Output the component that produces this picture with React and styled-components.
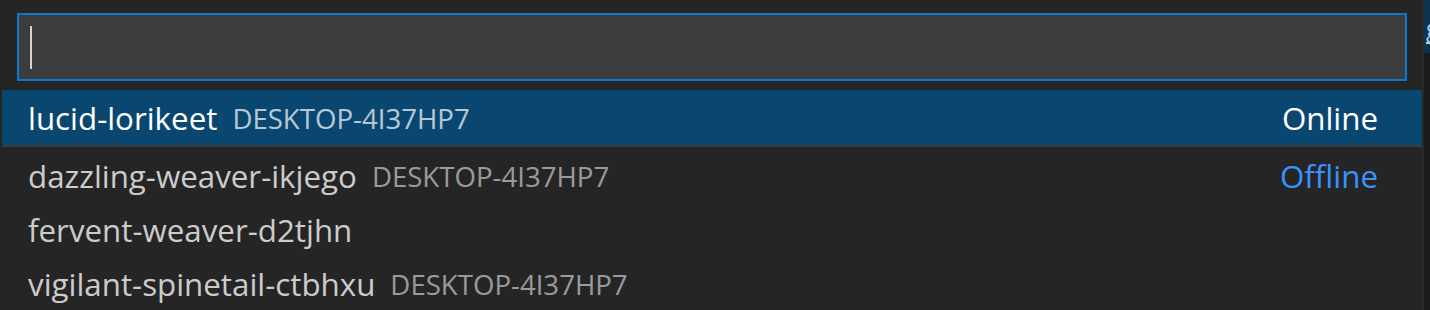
import styled, { createGlobalStyle } from "styled-components";

const GlobalStyle = createGlobalStyle`
  html, body {
    margin: 0;
    padding: 0;
    background: #1b1b1b;
  }
  body {
    font-family: "Open Sans", "Noto Sans", sans-serif;
  }
`;

const Screen = styled.div`
  display: flex;
  width: 1430px;
  height: 310px;
  overflow: hidden;
`;

const Panel = styled.div`
  width: 1423px;
  flex: none;
  background: #252526;
  padding-top: 13px;
  box-sizing: border-box;
`;

const InputBox = styled.div`
  margin: 0 16px 9px 17px;
  height: 68px;
  box-sizing: border-box;
  border: 2px solid #0a7ad1;
  background: #3c3c3c;
  display: flex;
  align-items: center;
  padding-left: 11px;
`;

const Caret = styled.span`
  width: 2px;
  height: 43px;
  background: #d4d4d4;
`;

const List = styled.div`
  padding: 0 1px 0 2px;
`;

const Row = styled.div`
  display: flex;
  align-items: center;
  height: ${(p) => (p.$selected ? "55px" : "54px")};
  border-bottom: ${(p) => (p.$selected ? "2px solid #3a3d41" : "none")};
  margin-bottom: ${(p) => (p.$selected ? "2px" : "0")};
  background: ${(p) => (p.$selected ? "#094771" : "transparent")};
  color: ${(p) => (p.$selected ? "#ffffff" : "#cccccc")};
  padding: 0 44px 0 26px;
  font-size: 31.3px;
  white-space: nowrap;
`;

const Label = styled.span`
  flex: none;
`;

const Description = styled.span`
  margin-left: 15px;
  font-size: 27.6px;
  opacity: 0.7;
`;

const Status = styled.span`
  margin-left: auto;
  color: ${(p) => (p.$offline ? "#3794ff" : "inherit")};
`;

const Side = styled.div`
  flex: 1;
  display: flex;
  flex-direction: column;
  border-left: 1px solid #2b2b2b;
`;

const SideTop = styled.div`
  height: 53px;
  background: #0e3350;
  overflow: hidden;
  padding-top: 14px;
  box-sizing: border-box;
`;

const SideLink = styled.span`
  display: block;
  margin-left: 2px;
  color: #9ccff5;
  font-size: 24px;
  line-height: 28px;
  border-bottom: 2px solid #c8c8c8;
  width: 20px;
`;

const items = [
  { name: "lucid-lorikeet", host: "DESKTOP-4I37HP7", status: "Online", selected: true },
  { name: "dazzling-weaver-ikjego", host: "DESKTOP-4I37HP7", status: "Offline" },
  { name: "fervent-weaver-d2tjhn" },
  { name: "vigilant-spinetail-ctbhxu", host: "DESKTOP-4I37HP7" },
];

export default function App() {
  return (
    <>
      <GlobalStyle />
      <Screen>
        <Panel>
          <InputBox>
            <Caret />
          </InputBox>
          <List>
            {items.map((it) => (
              <Row key={it.name} $selected={it.selected}>
                <Label>{it.name}</Label>
                {it.host && <Description>{it.host}</Description>}
                {it.status && (
                  <Status $offline={it.status === "Offline"}>{it.status}</Status>
                )}
              </Row>
            ))}
          </List>
        </Panel>
        <Side>
          <SideTop>
            <SideLink>g</SideLink>
          </SideTop>
        </Side>
      </Screen>
    </>
  );
}
